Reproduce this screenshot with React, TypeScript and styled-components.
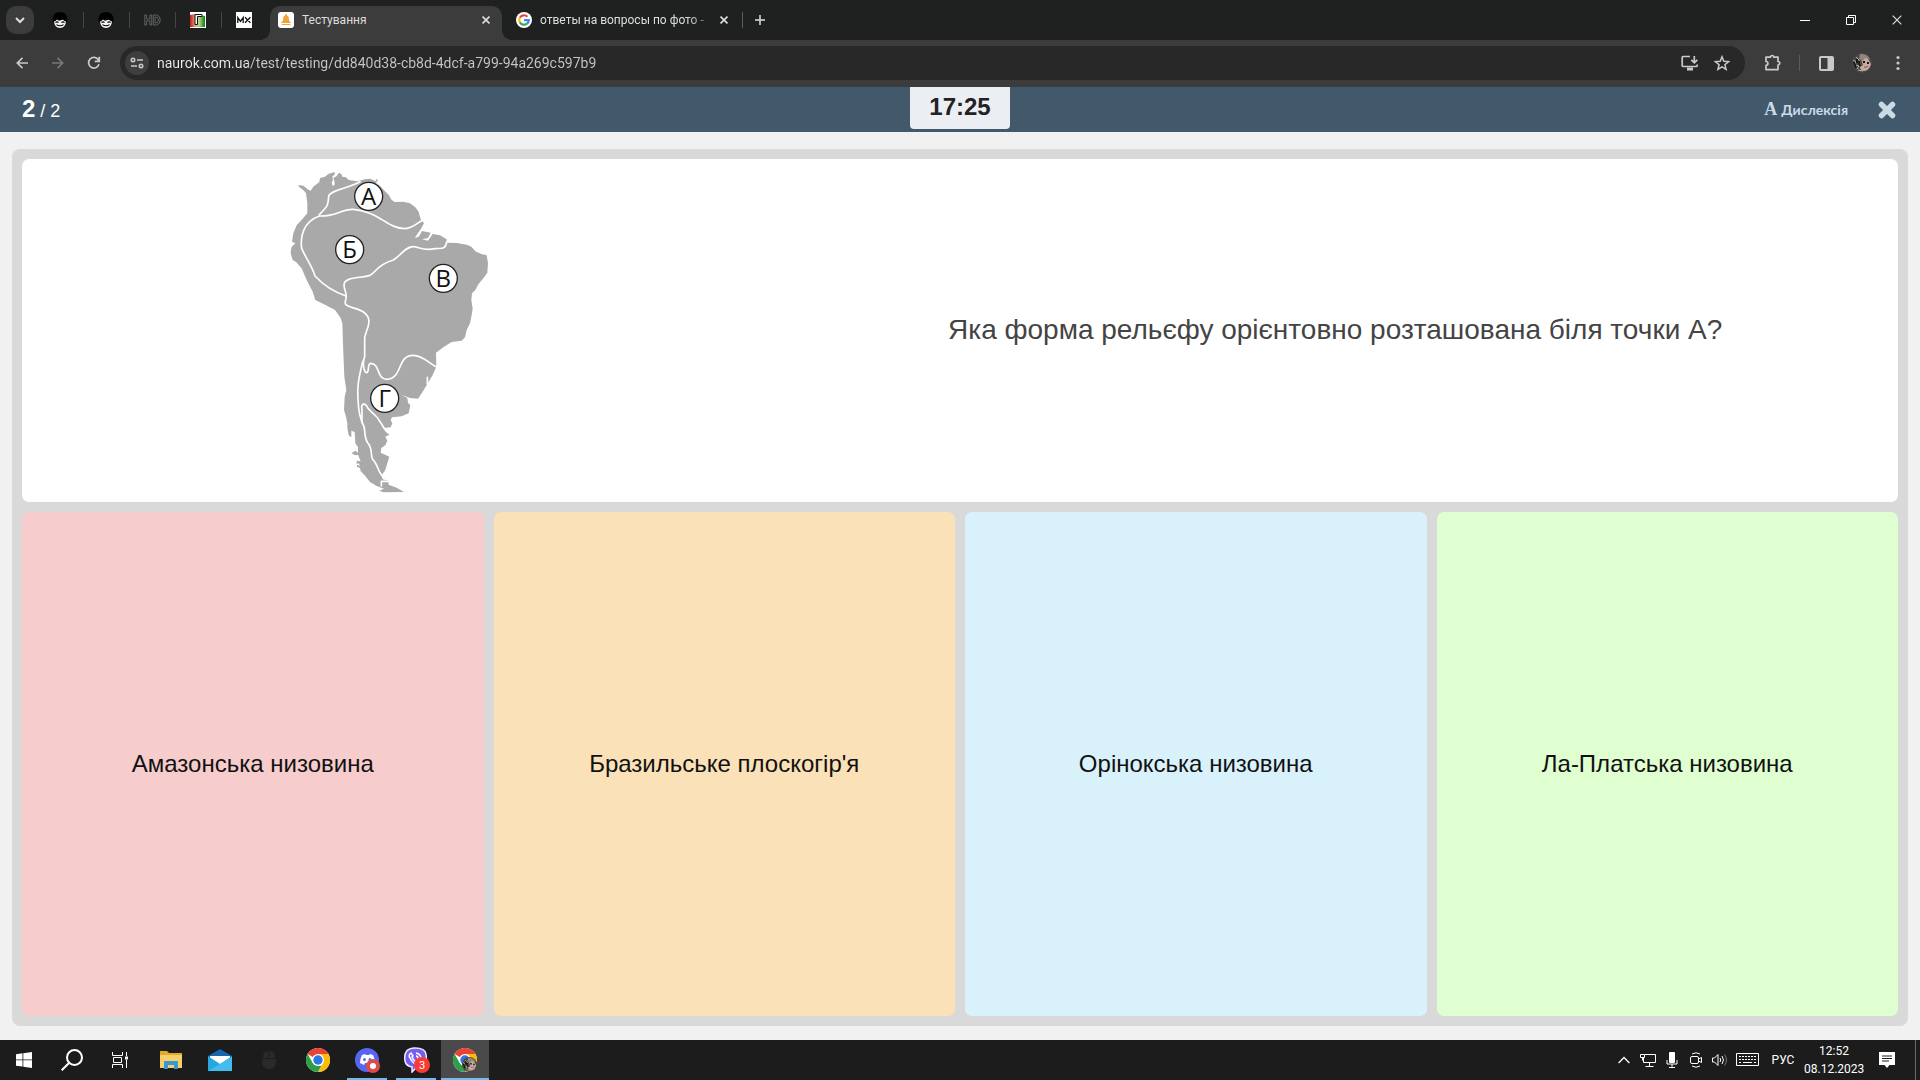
import React from "react";
import styled, { createGlobalStyle, css } from "styled-components";

const GlobalStyle = createGlobalStyle`
  *, *::before, *::after { box-sizing: border-box; }
  body { margin: 0; background: #f1f1f1; font-family: "Liberation Sans", Arial, sans-serif; }
  button, input { font: inherit; color: inherit; }
  svg { display: block; flex: none; }
`;

const ui = css`
  font-family: Roboto, "Noto Sans", sans-serif;
`;

const Screen = styled.div`
  display: flex;
  flex-direction: column;
  min-height: 100vh;
`;

const IconButton = styled.button<{ $w?: number; $h?: number; $bg?: string; $radius?: number }>`
  display: flex;
  flex: none;
  align-items: center;
  justify-content: center;
  width: ${(p) => p.$w ?? 36}px;
  height: ${(p) => p.$h ?? 34}px;
  padding: 0;
  border: 0;
  border-radius: ${(p) => p.$radius ?? 0}px;
  background: ${(p) => p.$bg ?? "transparent"};
`;

/* ---------- browser tabs ---------- */

const TabStrip = styled.div`
  ${ui}
  display: flex;
  align-items: center;
  height: 40px;
  padding-left: 6px;
  background: #1f2120;
  color: #dedede;
  font-size: 12px;
`;

const PinnedTabs = styled.div`
  display: flex;
  margin-left: 3px;
`;

const PinnedTab = styled(IconButton)`
  position: relative;
  & + &::before {
    content: "";
    position: absolute;
    left: 0;
    width: 1px;
    height: 16px;
    background: #454746;
  }
`;

const Tab = styled.div<{ $active?: boolean }>`
  position: relative;
  display: flex;
  align-items: center;
  align-self: flex-end;
  gap: 8px;
  width: ${(p) => (p.$active ? 232 : 240)}px;
  height: 34px;
  margin-left: ${(p) => (p.$active ? 3 : 0)}px;
  padding: 0 9px 6px ${(p) => (p.$active ? 8 : 14)}px;
  border-radius: 10px 10px 0 0;
  background: ${(p) => (p.$active ? "#3c3c3c" : "transparent")};
  ${(p) =>
    p.$active &&
    css`
      &::before,
      &::after {
        content: "";
        position: absolute;
        bottom: 0;
        width: 10px;
        height: 10px;
      }
      &::before {
        left: -10px;
        background: radial-gradient(circle at 0 0, transparent 10px, #3c3c3c 10px);
      }
      &::after {
        right: -10px;
        background: radial-gradient(circle at 100% 0, transparent 10px, #3c3c3c 10px);
      }
    `}
`;

const TabTitle = styled.span<{ $fade?: boolean }>`
  flex: 1;
  white-space: nowrap;
  line-height: 18px;
  ${(p) => p.$fade && "mask-image: linear-gradient(90deg, #000 88%, transparent 108%);"}
`;

const Separator = styled.span`
  flex: none;
  width: 1px;
  height: 16px;
  background: #5a5c5b;
`;

const Spacer = styled.span`
  flex: 1;
`;

/* ---------- toolbar ---------- */

const Toolbar = styled.div`
  ${ui}
  display: flex;
  align-items: center;
  height: 47px;
  padding: 0 4px 1px;
  background: #3c3c3c;
  color: #c9c9c9;
`;

const Omnibox = styled.div`
  display: flex;
  flex: 1;
  align-items: center;
  height: 34px;
  margin: 0 10px 0 8px;
  padding: 0 7px 0 5px;
  border-radius: 17px;
  background: #282828;
`;

const Address = styled.input`
  flex: 1;
  min-width: 0;
  height: 24px;
  margin-left: 8px;
  padding: 0;
  border: 0;
  outline: 0;
  background: linear-gradient(90deg, #ececec 91px, #c7c7c7 91px);
  background-clip: text;
  -webkit-text-fill-color: transparent;
  font-size: 14px;
`;

/* ---------- test header ---------- */

const TestHeader = styled.header`
  display: grid;
  grid-template-columns: 1fr auto 1fr;
  height: 45px;
  padding: 0 22px;
  background: #42596b;
  color: #fff;
`;

const Progress = styled.div`
  align-self: center;
  font-size: 18px;
  line-height: 28px;
  b {
    font-size: 24px;
  }
`;

const Timer = styled.time`
  width: 100px;
  height: 42px;
  border-radius: 0 0 4px 4px;
  background: #ebeff3;
  color: #222;
  font-size: 24px;
  font-weight: 700;
  line-height: 40px;
  text-align: center;
`;

const HeaderActions = styled.div`
  display: flex;
  align-items: center;
  justify-content: flex-end;
  gap: 28px;
  color: #cbdbe6;
`;

const DyslexiaButton = styled.button`
  display: flex;
  align-items: center;
  gap: 4px;
  padding: 0;
  border: 0;
  background: none;
  font-family: Lato, sans-serif;
  font-size: 14px;
  font-weight: 700;
  b {
    font-family: "Liberation Serif", serif;
    font-size: 18px;
  }
`;

/* ---------- question and answers ---------- */

const Content = styled.main`
  display: flex;
  flex: 1;
  padding: 17px 12px 14px;
  background: #f1f1f1;
`;

const Board = styled.div`
  display: flex;
  flex: 1;
  flex-direction: column;
  gap: 10px;
  padding: 10px;
  border-radius: 8px;
  background: #d9d9d9;
`;

const QuestionCard = styled.section`
  display: grid;
  grid-template-columns: 2fr 3fr;
  align-items: center;
  justify-items: center;
  padding: 4px 0;
  border-radius: 7px;
  background: #fff;
`;

const QuestionText = styled.h1`
  margin: 0;
  padding-bottom: 2px;
  color: #444;
  font-size: 28px;
  font-weight: 400;
  line-height: 36px;
`;

const Answers = styled.div`
  display: grid;
  flex: 1;
  grid-template-columns: repeat(4, 1fr);
  gap: 10px;
`;

const Answer = styled.button<{ $tone: string }>`
  padding: 10px;
  border: 0;
  border-radius: 7px;
  background: ${(p) => p.$tone};
  color: #111;
  font-size: 24px;
`;

/* ---------- taskbar ---------- */

const Taskbar = styled.footer`
  ${ui}
  display: flex;
  height: 40px;
  background: #1c1c1c;
  color: #fff;
  font-size: 12px;
`;

const SystemItems = styled.div`
  display: flex;
  margin-right: 3px;
`;

const AppItems = styled.div`
  display: flex;
  gap: 1px;
`;

const TaskItem = styled(IconButton)<{ $state?: "open" | "active" }>`
  background: ${(p) => (p.$state === "active" ? "#4a4a4a" : "transparent")};
  ${(p) =>
    p.$state &&
    css`
      background-image: linear-gradient(#76b9ed, #76b9ed);
      background-repeat: no-repeat;
      background-position: bottom;
      background-size: ${p.$state === "active" ? "100%" : "40px"} 2px;
    `}
`;

const Tray = styled.div`
  display: flex;
  align-items: center;
  margin-left: auto;
`;

const Language = styled.button`
  width: 42px;
  height: 40px;
  padding: 0;
  border: 0;
  background: none;
`;

const Clock = styled.div`
  width: 60px;
  line-height: 18px;
  text-align: center;
`;

const DesktopEdge = styled.span`
  width: 5px;
  height: 40px;
  margin-left: 5px;
  border-left: 1px solid #686868;
`;

/* ---------- drawings ---------- */

const stroke = { fill: "none", stroke: "currentColor", strokeWidth: 2 } as const;

const Cross = ({ size = 8 }: { size?: number }) => (
  <svg width={size} height={size} viewBox="0 0 10 10" {...stroke} strokeWidth={size > 9 ? 1.2 : 2}>
    <path d="M.7.7l8.6 8.6M9.3.7L.7 9.3" />
  </svg>
);

const Face = () => (
  <svg width="16" height="16" viewBox="0 0 16 16">
    <path d="M.5 8Q.5 0 8 0t7.500 8l-1 3h-13z" fill="#000" />
    <path d="M2 9.500Q4 9 5 7.500q1.500 1.500 3 1t3-.8Q12 9 14 9.500 13.500 15.500 8 16 2.500 15.500 2 9.500z" fill="#f4f4f4" />
    <path d="M3.500 10.500q1.500-1.200 3 0M9.500 10.500q1.500-1.200 3 0M4.500 12.600q3.500 2.200 7 0" fill="none" stroke="#000" strokeWidth="1.100" />
  </svg>
);

const HdIcon = () => (
  <svg width="17" height="12" viewBox="0 0 17 12" fill="none" stroke="#707070" strokeWidth=".8">
    <path d="M.8 1h1.800v4h3.300V1h1.800v10H5.900V6.800H2.600V11H.8zM9.300 1h3q4 .7 4 5t-4 5h-3zM11.100 2.900v6.200q3.400 0 3.400-3.100t-3.400-3.100z" />
  </svg>
);

const CubeIcon = () => (
  <svg width="16" height="16" viewBox="0 0 16 16">
    <defs>
      <linearGradient id="cube">
        <stop offset="0" stopColor="#c41d10" />
        <stop offset=".35" stopColor="#e8a080" />
        <stop offset=".6" stopColor="#b5d98a" />
        <stop offset="1" stopColor="#0e7a16" />
      </linearGradient>
    </defs>
    <path fill="#fff" d="M0 0h16v16H0z" />
    <path fill="url(#cube)" d="M0 3l5-1 10 2v11H0z" />
    <path d="M5 12.500V2.500h7v2H7.500v8z" fill="#fff" stroke="#111" />
  </svg>
);

const MxIcon = () => (
  <svg width="16" height="16" viewBox="0 0 16 16">
    <path fill="#fff" d="M0 0h16v16H0z" />
    <path d="M1.800 11V5.500L4.500 9.300 7.200 5.500V11M9 5.200l5.400 5.600M14.400 5.200L9 10.800" fill="none" stroke="#111" strokeWidth="1.300" />
  </svg>
);

const BellIcon = () => (
  <svg width="16" height="16" viewBox="0 0 16 16">
    <rect width="16" height="16" rx="3" fill="#fff" />
    <path d="M8 2c1 0 1 1 1 1.500 2 .8 2 3 2 5l2 2.500H3l2-2.500c0-2 0-4.200 2-5C7 3 7 2 8 2zM3.500 12h9v1h-9z" fill="#f2a33c" />
  </svg>
);

const GoogleIcon = () => (
  <svg width="16" height="16" viewBox="0 0 16 16" fill="none" strokeWidth="2.200">
    <circle cx="8" cy="8" r="8" fill="#fff" />
    <path d="M11.400 4.700A4.800 4.800 0 0 0 3.800 5.700" stroke="#ea4335" />
    <path d="M3.800 5.700a4.800 4.800 0 0 0 0 4.600" stroke="#fbbc05" />
    <path d="M3.800 10.300a4.800 4.800 0 0 0 7.200 1.400" stroke="#34a853" />
    <path d="M11 11.700A4.600 4.600 0 0 0 12.800 8.200H8" stroke="#4285f4" />
  </svg>
);

const Portrait = ({ size }: { size: number }) => (
  <svg width={size} height={size} viewBox="0 0 20 20">
    <circle cx="10" cy="10" r="10" fill="#4b4642" />
    <path d="M9 6q4-4 7 0l3 5q-2 7-7 7-4-1-4-4l3-2z" fill="#c5aaa0" />
    <path d="M8 1q8-1 10 6l-5-2-2 3-4-2z" fill="#92857c" />
    <path d="M1 7l3 2-1 3 4 1-2 3M4 4l3 3 2 5M6 17l5 1" stroke="#bdb8b3" strokeWidth="1" fill="none" />
    <path d="M11 9h2m2 1h2M2 9l2 6M5 6v4M7 8l1 5" stroke="#161616" strokeWidth="2" />
    <path d="M12 14q2 1 4-1" stroke="#a0464a" fill="none" />
  </svg>
);

const ChromeShapes = () => (
  <>
    <circle cx="12" cy="12" r="12" fill="#fff" />
    <path d="M12 12L1.600 6A12 12 0 0 1 22.400 6z" fill="#ea4335" />
    <path d="M12 6h10.400A12 12 0 0 1 12 24l5.200-9z" fill="#fbbc05" />
    <path d="M1.600 6l5.200 9L12 18l3.500-.5L12 24A12 12 0 0 1 1.600 6z" fill="#2f9e49" />
    <circle cx="12" cy="12" r="6" fill="#fff" />
    <circle cx="12" cy="12" r="4.700" fill="#2b78e4" />
  </>
);

const regions = [
  { letter: "А", x: 296, y: 139 },
  { letter: "Б", x: 239, y: 299 },
  { letter: "В", x: 520, y: 385 },
  { letter: "Г", x: 344, y: 745 },
];

const ContinentMap = () => (
  <svg width="230" height="335" viewBox="36 39 690 1005" role="img" aria-label="Південна Америка">
    <path
      fill="#a9a9a9"
      d="M85 105L100 107 115 119 122 122 130 110 148 96 150 84 165 80 175 72 193 66 195 72 187 80 189 90 185 98 188 108 194 104 193 92 190 84 200 78 207 68 214 72 217 80 228 82 236 90 262 94 285 88 300 86 318 94 320 86 324 90 318 99 330 108 345 124 356 134 365 150 374 156 400 155 420 160 436 172 446 185 452 208 462 220 452 238 434 264 446 260 456 243 482 248 474 264 456 268 474 272 488 252 510 256 530 268 530 278 560 279 590 284 604 290 616 304 634 312 650 316 654 340 652 368 640 385 624 404 616 420 606 430 604 450 608 476 604 500 600 520 590 540 585 562 575 572 545 576 520 592 498 608 499 650 488 675 475 697 458 725 444 746 420 744 394 734 412 744 414 758 421 766 416 790 395 799 366 802 362 810 367 820 362 832 340 834 348 846 358 854 346 860 352 872 346 886 334 894 332 908 358 920 352 940 345 962 334 976 338 988 354 992 356 1004 380 1013 402 1026 340 1027 328 1022 342 1016 320 1008 300 996 284 976 272 964 270 954 260 950 262 944 270 948 266 940 260 942 260 932 272 934 264 914 256 916 244 910 256 902 264 908 264 892 256 880 254 846 244 842 244 862 236 856 232 834 232 820 228 800 222 780 224 740 229 720 223 680 220 610 217 520 212 504 195 480 165 464 136 450 128 425 110 390 95 355 78 336 68 330 62 310 64 292 76 280 66 275 70 250 80 226 98 206 112 190 112 160 108 130 100 120 88 112Z"
    />
    <g fill="none" stroke="#fff" strokeWidth="5" strokeLinecap="round" strokeLinejoin="round">
      <path d="M270 95C235 115 182 120 176 138C174 165 176 165 148 194" />
      <path d="M148 198C200 200 215 176 250 178C330 185 350 235 405 236C430 234 440 220 455 212" />
      <path d="M148 198C100 215 90 260 95 295C110 330 125 345 135 378C160 405 190 425 228 438" />
      <path d="M530 276C526 300 515 294 495 296C460 304 445 290 430 290C405 290 395 315 370 330C320 345 320 365 300 376C270 385 222 380 222 405C222 420 232 430 228 445C225 460 220 465 245 472C300 485 304 510 290 542L284 562V620C276 640 282 668 290 668C300 666 290 642 302 640C330 640 320 688 350 688C400 685 380 615 430 616C460 618 470 635 498 650" />
      <path d="M278 635C262 700 262 720 264 750C266 790 272 810 280 825C288 840 280 860 294 880C310 900 300 915 308 928C325 945 325 970 338 978" />
      <path d="M276 818V780C272 760 285 755 294 775C310 795 320 795 328 812C338 825 340 834 348 842M334 1008V994H352M472 682V702" />
    </g>
    {regions.map((r) => (
      <g key={r.letter}>
        <circle cx={r.x} cy={r.y} r="42" fill="#fff" stroke="#222" strokeWidth="4" />
        <text x={r.x} y={r.y + 26} fontSize="72" textAnchor="middle" fontFamily="Open Sans, Noto Sans, sans-serif" fill="#111">
          {r.letter}
        </text>
      </g>
    ))}
  </svg>
);

const answers = [
  { text: "Амазонська низовина", tone: "#f6cccc" },
  { text: "Бразильське плоскогір'я", tone: "#fbe1b7" },
  { text: "Орінокська низовина", tone: "#d9f1fb" },
  { text: "Ла-Платська низовина", tone: "#dfffd0" },
];

const pinned = [
  { label: "Закріплена вкладка 1", icon: <Face /> },
  { label: "Закріплена вкладка 2", icon: <Face /> },
  { label: "HD", icon: <HdIcon /> },
  { label: "Закріплена вкладка 4", icon: <CubeIcon /> },
  { label: "MX", icon: <MxIcon /> },
];

const BrowserTabs = () => (
  <TabStrip>
    <IconButton $w={28} $h={28} $bg="#3c3c3c" $radius={10} aria-label="Пошук вкладок">
      <svg width="10" height="8" viewBox="0 0 10 8" {...stroke}>
        <path d="M1 2l4 4 4-4" />
      </svg>
    </IconButton>
    <PinnedTabs>
      {pinned.map((p) => (
        <PinnedTab key={p.label} $w={46} $h={16} aria-label={p.label}>
          {p.icon}
        </PinnedTab>
      ))}
    </PinnedTabs>
    <Tab $active>
      <BellIcon />
      <TabTitle>Тестування</TabTitle>
      <IconButton $w={14} $h={14} aria-label="Закрити вкладку">
        <Cross />
      </IconButton>
    </Tab>
    <Tab>
      <GoogleIcon />
      <TabTitle $fade>ответы на вопросы по фото -</TabTitle>
      <IconButton $w={18} $h={14} aria-label="Закрити вкладку">
        <Cross />
      </IconButton>
    </Tab>
    <Separator />
    <IconButton $w={34} aria-label="Нова вкладка">
      <svg width="10" height="10" viewBox="0 0 10 10" {...stroke} strokeWidth="1.500">
        <path d="M5 0v10M0 5h10" />
      </svg>
    </IconButton>
    <Spacer />
    <IconButton $w={46} aria-label="Згорнути">
      <svg width="10" height="10" viewBox="0 0 10 10">
        <path d="M0 5h10v1H0z" fill="#fff" />
      </svg>
    </IconButton>
    <IconButton $w={46} aria-label="Відновити">
      <svg width="10" height="10" viewBox="0 0 10 10" fill="none" stroke="#fff">
        <path d="M.5 2.500h7v7h-7zM2.500 2.500v-2h7v7h-2" />
      </svg>
    </IconButton>
    <IconButton $w={46} aria-label="Закрити">
      <Cross size={10} />
    </IconButton>
  </TabStrip>
);

const BrowserToolbar = () => (
  <Toolbar>
    <IconButton aria-label="Назад">
      <svg width="12" height="12" viewBox="0 0 12 12" {...stroke} strokeWidth="1.700">
        <path d="M12 6H1.500M6.500 .8L1.300 6l5.200 5.200" />
      </svg>
    </IconButton>
    <IconButton aria-label="Вперед">
      <svg width="12" height="12" viewBox="0 0 12 12" fill="none" stroke="#777" strokeWidth="1.700">
        <path d="M0 6h10.500M5.500 .8L10.700 6l-5.200 5.200" />
      </svg>
    </IconButton>
    <IconButton aria-label="Оновити">
      <svg width="14" height="14" viewBox="0 0 14 14" {...stroke} strokeWidth="1.700">
        <path d="M12 8.300A5.300 5.300 0 1 1 11.500 4M12.300 .8v4.600H7.700" />
      </svg>
    </IconButton>
    <Omnibox>
      <IconButton $w={24} $h={24} $bg="#3e3e3e" $radius={12} aria-label="Відомості про сайт">
        <svg width="14" height="12" viewBox="0 0 14 12" {...stroke} strokeWidth="1.600">
          <circle cx="3" cy="3" r="1.700" />
          <circle cx="11" cy="9" r="1.700" />
          <path d="M7 3h6M1 9h6" />
        </svg>
      </IconButton>
      <Address aria-label="Адреса" defaultValue="naurok.com.ua/test/testing/dd840d38-cb8d-4dcf-a799-94a269c597b9" />
      <IconButton $w={32} aria-label="Встановити">
        <svg width="18" height="16" viewBox="0 0 18 16" {...stroke} strokeWidth="1.700">
          <path d="M9 1.500H2.200q-1 0-1 1v8q0 1 1 1h13q1 0 1-1V9.500M13.300 1v6.500M10.300 4.800l3 3 3-3" />
          <path d="M6 14h6" strokeWidth="3" />
        </svg>
      </IconButton>
      <IconButton $w={32} aria-label="Закладка">
        <svg width="16" height="16" viewBox="0 0 16 16" {...stroke} strokeWidth="1.500">
          <path d="M8 1.700l1.800 4.500 4.800.4-3.700 3.100 1.200 4.700L8 11.900l-4.100 2.500 1.200-4.700L1.400 6.600l4.800-.4z" />
        </svg>
      </IconButton>
    </Omnibox>
    <IconButton aria-label="Розширення">
      <svg width="16" height="18" viewBox="1 0 16 18" {...stroke} strokeWidth="1.700">
        <path d="M2 3.200h4.400a1.700 1.700 0 0 1 3.400 0H14v4.300a1.700 1.700 0 0 1 0 3.500v4.600H2v-4.300a1.900 1.900 0 0 0 0-3.800z" strokeLinejoin="round" />
      </svg>
    </IconButton>
    <IconButton as="span" $w={17}>
      <Separator />
    </IconButton>
    <IconButton aria-label="Бічна панель">
      <svg width="15" height="15" viewBox="0 0 15 15" {...stroke}>
        <rect x="1" y="1" width="13" height="13" rx="1" />
        <path d="M8.500 1H14v13H8.500z" fill="currentColor" stroke="none" />
      </svg>
    </IconButton>
    <IconButton aria-label="Профіль">
      <Portrait size={20} />
    </IconButton>
    <IconButton aria-label="Меню">
      <svg width="4" height="16" viewBox="0 0 4 16" fill="currentColor">
        <circle cx="2" cy="2.500" r="1.600" />
        <circle cx="2" cy="8" r="1.600" />
        <circle cx="2" cy="13.500" r="1.600" />
      </svg>
    </IconButton>
  </Toolbar>
);

const WindowsTaskbar = () => (
  <Taskbar>
    <SystemItems>
      <TaskItem $w={48} $h={40} aria-label="Пуск">
        <svg width="16" height="16" viewBox="0 0 16 16" fill="#fff">
          <path d="M0 2.200l6.500-.9v6.200H0zM7.300 1.200L16 0v7.500H7.300zM0 8.300h6.500v6.200L0 13.700zM7.300 8.300H16V16l-8.700-1.200z" />
        </svg>
      </TaskItem>
      <TaskItem $w={48} $h={40} aria-label="Пошук">
        <svg width="22" height="22" viewBox="0 0 22 22" fill="none" stroke="#fff" strokeWidth="2">
          <circle cx="13.500" cy="8.500" r="7.500" />
          <path d="M8 14l-7.300 7.300" />
        </svg>
      </TaskItem>
      <TaskItem $w={48} $h={40} aria-label="Подання завдань">
        <svg width="16" height="16" viewBox="0 0 16 16" fill="none" stroke="#fff">
          <path d="M.5 0v3.500h10V0M.5 16v-3.500h10V16M1.500 5.500h8v5h-8zM14.500 0v4M14.500 8v8" />
          <path d="M13 4.500h3v3h-3z" fill="#fff" stroke="none" />
        </svg>
      </TaskItem>
    </SystemItems>
    <AppItems>
      <TaskItem $w={48} $h={40} aria-label="Провідник">
        <svg width="22" height="18" viewBox="0 0 22 18">
          <path d="M0 0h7l2 2h13v15H0z" fill="#e3a92b" />
          <path d="M0 4h22v13H0z" fill="#f5cf6c" />
          <path d="M4 18v-7q0-1 1-1h12q1 0 1 1v7h-4v-4H8v4z" fill="#3b97d3" />
        </svg>
      </TaskItem>
      <TaskItem $w={48} $h={40} aria-label="Пошта">
        <svg width="24" height="22" viewBox="0 0 24 22">
          <path d="M0 7L12 0l12 7v4H0z" fill="#1367ac" />
          <path d="M2 7h20v8H2z" fill="#fff" />
          <path d="M0 7l12 8 12-8v15H0z" fill="#27a6df" />
          <path d="M0 22L24 8v14z" fill="#45bdec" />
        </svg>
      </TaskItem>
      <TaskItem $w={48} $h={40} aria-label="Миша">
        <svg width="16" height="20" viewBox="0 0 16 20" fill="#2a2a2a">
          <path d="M2 7q0-6 5.500-6v7H2zM8.500 1Q14 1 14 7v1H8.500zM1 9h14v4q-1 6-7 6t-7-6z" />
        </svg>
      </TaskItem>
      <TaskItem $w={48} $h={40} aria-label="Chrome">
        <svg width="24" height="24" viewBox="0 0 24 24">
          <ChromeShapes />
        </svg>
      </TaskItem>
      <TaskItem $w={48} $h={40} $state="open" aria-label="Discord">
        <svg width="26" height="26" viewBox="0 0 26 26">
          <circle cx="13" cy="13" r="12" fill="#5865f2" />
          <path d="M8 8l3-1 1 1h3l1-1 3 1q2 4 2 8l-4 2-1-2h-5l-1 2-4-2q0-4 2-8z" fill="#fff" />
          <circle cx="10.500" cy="12.500" r="1.500" fill="#5865f2" />
          <circle cx="16" cy="12.500" r="1.500" fill="#5865f2" />
          <circle cx="19" cy="19" r="7" fill="#dc4c4c" />
          <circle cx="19" cy="19" r="3" fill="#fff" />
        </svg>
      </TaskItem>
      <TaskItem $w={48} $h={40} $state="open" aria-label="Viber, 3">
        <svg width="28" height="26" viewBox="0 0 28 26">
          <path d="M13 1Q23 1 24 7q1 7-1 11-3 3-9 3l-4 4v-5q-6-1-7-6Q1 1 13 1z" fill="#7360f2" stroke="#eee9ff" strokeWidth="1.500" />
          <path d="M9 6q-3 2-1 5 3 6 8 7 3 0 2-3l-3-1-1 1q-3-2-4-5l1-1zM14 6q5 1 5 6M14 9q2 0 2 3" fill="none" stroke="#fff" strokeWidth="1.500" />
          <circle cx="20" cy="18" r="8" fill="#fb3a36" />
          <text x="20" y="22" fontSize="11" textAnchor="middle" fill="#fff">3</text>
        </svg>
      </TaskItem>
      <TaskItem $w={48} $h={40} $state="active" aria-label="Chrome, Тестування">
        <svg width="24" height="24" viewBox="0 0 24 24">
          <ChromeShapes />
          <svg x="9" y="9" width="15" height="15" viewBox="0 0 20 20">
            <Portrait size={20} />
          </svg>
        </svg>
      </TaskItem>
    </AppItems>
    <Tray>
      <IconButton $w={24} $h={40} aria-label="Приховані піктограми">
        <svg width="12" height="8" viewBox="0 0 12 8" fill="none" stroke="#fff" strokeWidth="1.300">
          <path d="M.6 7L6 1.500 11.400 7" />
        </svg>
      </IconButton>
      <IconButton $w={24} $h={40} aria-label="Мережа">
        <svg width="16" height="14" viewBox="0 0 16 14" fill="none" stroke="#fff">
          <path d="M5 1.500h10.500v8H3.500V5M9.500 9.500v4M5.500 13.500h8M.5 1.500h4v3h-4zM2.500 4.500v3" />
        </svg>
      </IconButton>
      <IconButton $w={24} $h={40} aria-label="Мікрофон">
        <svg width="12" height="16" viewBox="0 0 12 16" fill="none" stroke="#fff">
          <rect x="3" y="0" width="6" height="11" rx="1" fill="#fff" stroke="none" />
          <path d="M1 8v4h10V8M6 12v3.500M3 15.500h6" />
        </svg>
      </IconButton>
      <IconButton $w={24} $h={40} aria-label="Камера">
        <svg width="12" height="16" viewBox="0 0 12 16" fill="none" stroke="#fff">
          <rect x=".5" y="4.500" width="8" height="7" rx="1.500" />
          <path d="M8.500 7l3-1.500v5L8.500 9M2 2q4-2.500 8 0M2 14q4 2.500 8 0" />
        </svg>
      </IconButton>
      <IconButton $w={24} $h={40} aria-label="Гучність">
        <svg width="16" height="14" viewBox="0 0 16 14" fill="none" stroke="#fff">
          <path d="M.5 5h2L6 1.500v11L2.500 9h-2zM8 5q1.500 2 0 4M10 3q3 4 0 8" />
          <path d="M12.500 1.500q4 5.500 0 11" stroke="#777" />
        </svg>
      </IconButton>
      <IconButton $w={30} $h={40} aria-label="Клавіатура">
        <svg width="23" height="14" viewBox="0 0 23 14" fill="none" stroke="#fff">
          <path d="M.5.500h22v12H.5z" />
          <path d="M3 3.500h17M3 6.500h17" strokeDasharray="2 1" />
          <path d="M3 9.500h2M7 9.500h9M18 9.500h2" />
        </svg>
      </IconButton>
      <Language>РУС</Language>
      <Clock>
        12:52
        <br />
        08.12.2023
      </Clock>
      <IconButton $w={46} $h={40} aria-label="Сповіщення">
        <svg width="16" height="16" viewBox="0 0 16 16">
          <path d="M0 0h16v13h-5.500L8 16l-2.500-3H0z" fill="#fff" />
          <path d="M3 4h10M3 6.500h10M3 9h7" stroke="#1c1c1c" />
        </svg>
      </IconButton>
      <DesktopEdge />
    </Tray>
  </Taskbar>
);

export default function App() {
  return (
    <Screen>
      <GlobalStyle />
      <BrowserTabs />
      <BrowserToolbar />
      <TestHeader>
        <Progress>
          <b>2</b> / 2
        </Progress>
        <Timer>17:25</Timer>
        <HeaderActions>
          <DyslexiaButton>
            <b>A</b> Дислексія
          </DyslexiaButton>
          <IconButton $w={22} $h={22} aria-label="Завершити тест">
            <svg width="18" height="18" viewBox="0 0 18 18" fill="none" stroke="currentColor" strokeWidth="5.500" strokeLinecap="round">
              <path d="M3.500 3.500l11 11M14.500 3.500l-11 11" />
            </svg>
          </IconButton>
        </HeaderActions>
      </TestHeader>
      <Content>
        <Board>
          <QuestionCard>
            <ContinentMap />
            <QuestionText>Яка форма рельєфу орієнтовно розташована біля точки А?</QuestionText>
          </QuestionCard>
          <Answers>
            {answers.map((a) => (
              <Answer key={a.text} $tone={a.tone}>
                {a.text}
              </Answer>
            ))}
          </Answers>
        </Board>
      </Content>
      <WindowsTaskbar />
    </Screen>
  );
}
